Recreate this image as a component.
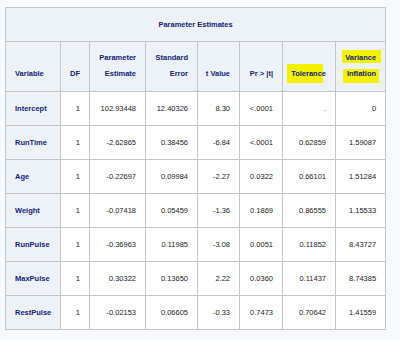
import React from 'react';

const rows = [
    ['Intercept', '1', '102.93448', '12.40326', '8.30', '<.0001', '.', '0'],
    ['RunTime', '1', '-2.62865', '0.38456', '-6.84', '<.0001', '0.62859', '1.59087'],
    ['Age', '1', '-0.22697', '0.09984', '-2.27', '0.0322', '0.66101', '1.51284'],
    ['Weight', '1', '-0.07418', '0.05459', '-1.36', '0.1869', '0.86555', '1.15533'],
    ['RunPulse', '1', '-0.36963', '0.11985', '-3.08', '0.0051', '0.11852', '8.43727'],
    ['MaxPulse', '1', '0.30322', '0.13650', '2.22', '0.0360', '0.11437', '8.74385'],
    ['RestPulse', '1', '-0.02153', '0.06605', '-0.33', '0.7473', '0.70642', '1.41559'],
];

const Mark = ({ children, box }) => (
    <span className="relative inline-block">
        <span className={`absolute bg-[#f2f200] ${box}`}></span>
        <span className="relative">{children}</span>
    </span>
);

const App = () => {
    const head = "border border-[#c3c5c9] bg-[#edf2f9] text-[#112277] font-bold align-bottom pb-[9px]";
    const th = `${head} text-right pr-[9px]`;
    const td = "border border-[#c3c5c9] bg-white text-[#1c1c1c] text-right pr-[9px] h-[34px]";

    return (
        <div className="min-h-screen bg-[#f8f9fd] pt-[7px] pl-[5px]" style={{ fontFamily: '"Liberation Sans", Arial, sans-serif' }}>
            <table className="table-fixed w-[380px] text-[7.5px] leading-[16px]">
                <colgroup>
                    <col className="w-[55px]" />
                    <col className="w-[29px]" />
                    <col className="w-[56px]" />
                    <col className="w-[52px]" />
                    <col className="w-[42px]" />
                    <col className="w-[43px]" />
                    <col className="w-[53px]" />
                    <col className="w-[50px]" />
                </colgroup>
                <thead>
                    <tr>
                        <th colSpan={8} className="border border-[#c3c5c9] bg-[#edf2f9] text-[#112277] font-bold text-center h-[34px]">
                            Parameter Estimates
                        </th>
                    </tr>
                    <tr className="h-[50px]">
                        <th className={`${head} text-left pl-[9px]`}>Variable</th>
                        <th className={th}>DF</th>
                        <th className={th}>Parameter<br />Estimate</th>
                        <th className={th}>Standard<br />Error</th>
                        <th className={th}>t Value</th>
                        <th className={th}>Pr &gt; |t|</th>
                        <th className={th}>
                            <Mark box="-left-[4px] right-[3px] -top-[2px] bottom-[-1px]">Tolerance</Mark>
                        </th>
                        <th className={th}>
                            <Mark box="-left-[3px] -right-[5px] top-0 bottom-[3px]">Variance</Mark>
                            <br />
                            <Mark box="-left-[4px] -right-[3px] top-[3px] -bottom-[1px]">Inflation</Mark>
                        </th>
                    </tr>
                </thead>
                <tbody>
                    {rows.map((r) => (
                        <tr key={r[0]}>
                            <td className="border border-[#c3c5c9] bg-[#edf2f9] text-[#112277] font-bold text-left pl-[9px] h-[34px]">{r[0]}</td>
                            {r.slice(1).map((v, i) => (
                                <td key={i} className={td}>{v}</td>
                            ))}
                        </tr>
                    ))}
                </tbody>
            </table>
        </div>
    );
};

export default App;
